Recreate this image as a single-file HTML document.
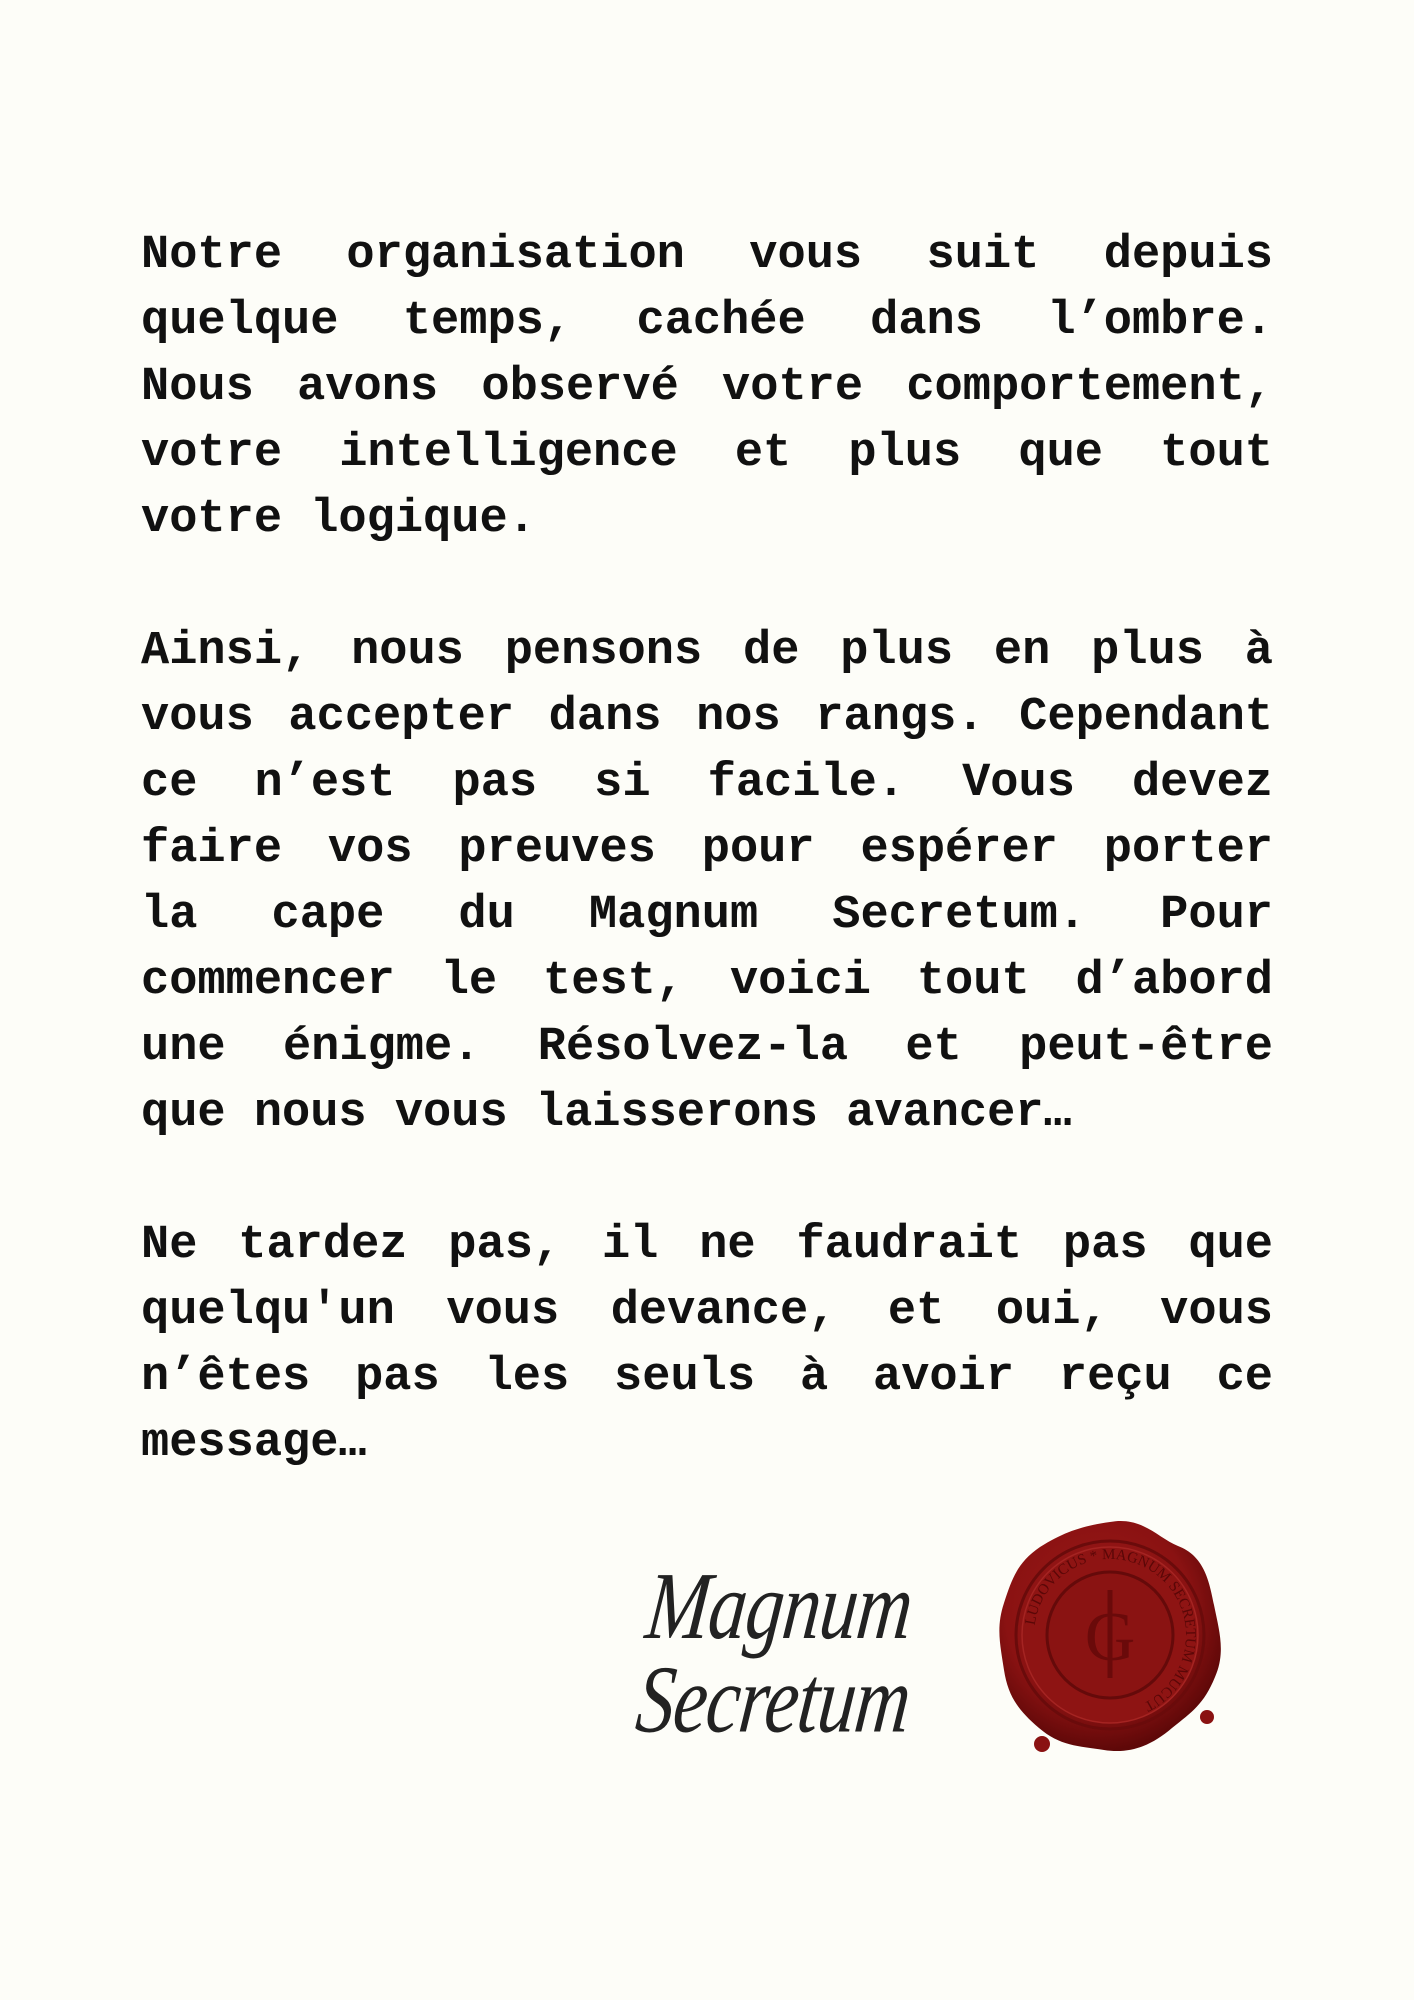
<!DOCTYPE html>
<html><head><meta charset="utf-8">
<style>
html,body{margin:0;padding:0;background:#fdfdf8;}
body{width:1414px;height:2000px;position:relative;overflow:hidden;}
.txt{position:absolute;left:141px;top:223px;width:1132px;font-family:"Liberation Mono",monospace;font-weight:bold;font-size:47px;line-height:66px;color:#111;}
.j{text-align:justify;text-align-last:justify;white-space:nowrap;}
.l{white-space:nowrap;}
.b{height:66px;}
.sig{position:absolute;left:652px;top:1560px;font-family:"Liberation Serif",serif;font-style:italic;font-size:80px;line-height:78px;color:#222;letter-spacing:-1px;transform:skewX(-6deg) scaleX(0.95) scaleY(1.2);transform-origin:0 0;}
</style></head><body>
<div class="txt">
<div class="j">Notre organisation vous suit depuis</div>
<div class="j">quelque temps, cachée dans l’ombre.</div>
<div class="j">Nous avons observé votre comportement,</div>
<div class="j">votre intelligence et plus que tout</div>
<div class="l">votre logique.</div>
<div class="b"></div>
<div class="j">Ainsi, nous pensons de plus en plus à</div>
<div class="j">vous accepter dans nos rangs. Cependant</div>
<div class="j">ce n’est pas si facile. Vous devez</div>
<div class="j">faire vos preuves pour espérer porter</div>
<div class="j">la cape du Magnum Secretum. Pour</div>
<div class="j">commencer le test, voici tout d’abord</div>
<div class="j">une énigme. Résolvez-la et peut-être</div>
<div class="l">que nous vous laisserons avancer…</div>
<div class="b"></div>
<div class="j">Ne tardez pas, il ne faudrait pas que</div>
<div class="j">quelqu'un vous devance, et oui, vous</div>
<div class="j">n’êtes pas les seuls à avoir reçu ce</div>
<div class="l">message…</div>
</div>
<div class="sig">Magnum<br>Secretum</div>
<svg style="position:absolute;left:990px;top:1510px" width="240" height="250" viewBox="0 0 240 250">
<defs>
<radialGradient id="g" cx="45%" cy="40%" r="60%">
<stop offset="0" stop-color="#9e1a18"/><stop offset="0.7" stop-color="#8a1212"/><stop offset="1" stop-color="#5e0808"/>
</radialGradient>
</defs>
<path d="M120 12 C152 6 168 28 188 36 C214 46 219 70 224 95 C229 120 236 142 225 167 C214 194 202 202 182 218 C161 236 140 244 114 240 C88 236 70 236 49 218 C28 200 18 186 14 160 C10 134 6 117 14 93 C22 68 28 52 50 37 C74 22 92 16 120 12 Z" fill="url(#g)"/>
<circle cx="120" cy="125" r="94" fill="none" stroke="#6a0b0b" stroke-width="3"/>
<circle cx="120" cy="125" r="88" fill="#8e1413" stroke="#a52422" stroke-width="1.5"/>
<circle cx="120" cy="125" r="63" fill="#8a1312" stroke="#650a0a" stroke-width="3"/>
<path id="arc" d="M120 125 m-76 0 a76 76 0 1 1 152 0 a76 76 0 1 1 -152 0" fill="none"/>
<text font-family="Liberation Serif,serif" font-size="15" fill="#5a0707"><textPath href="#arc" startOffset="2%">LUDOVICUS * MAGNUM SECRETUM MUCUT</textPath></text>
<text x="120" y="150" text-anchor="middle" font-family="Liberation Serif,serif" font-size="70" fill="#6a0a0a">G</text>
<line x1="120" y1="80" x2="120" y2="168" stroke="#6a0a0a" stroke-width="5"/>
<circle cx="52" cy="234" r="8" fill="#8a1212"/>
<circle cx="217" cy="207" r="7" fill="#8a1212"/>
</svg>
</body></html>
